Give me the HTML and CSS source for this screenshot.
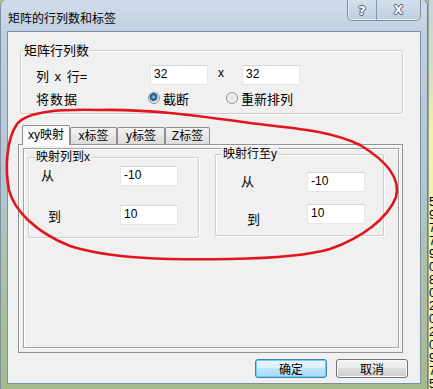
FILE: index.html
```html
<!DOCTYPE html>
<html lang="zh-CN">
<head>
    <meta charset="UTF-8">
    <title>矩阵的行列数和标签</title>
    <link rel="stylesheet" href="styles.css">
</head>
<body>

<div class="desk">
    <div class="window">
        <!-- Title bar -->
        <div class="titlebar">
            <span class="title">矩阵的行列数和标签</span>
            <div class="caption-btns">
                <span class="cbtn help">?</span>
                <span class="cbtn close">X</span>
            </div>
        </div>

        <div class="client">
            <!-- Matrix size -->
            <div class="group size-group">
                <div class="group-title">矩阵行列数</div>
                <div class="row first">
                    <span class="lbl">列 x 行=</span>
                    <span class="edit">32</span>
                    <span class="times">x</span>
                    <span class="edit">32</span>
                </div>
                <div class="row second">
                    <span class="lbl">将数据</span>
                    <span class="radio r1 checked"><i></i>截断</span>
                    <span class="radio"><i></i>重新排列</span>
                </div>
            </div>

            <!-- Tabs -->
            <div class="tabs">
                <span class="tab active t1">xy映射</span>
                <span class="tab t2">x标签</span>
                <span class="tab t3">y标签</span>
                <span class="tab t4">Z标签</span>
            </div>
            <div class="panel">
                <div class="page">
                    <div class="group map map-x">
                        <div class="group-title">映射列到x</div>
                        <div class="field f1">
                            <span class="mlbl">从</span>
                            <span class="edit">-10</span>
                        </div>
                        <div class="field f2">
                            <span class="mlbl">到</span>
                            <span class="edit">10</span>
                        </div>
                    </div>
                    <div class="group map map-y">
                        <div class="group-title">映射行至y</div>
                        <div class="field f1">
                            <span class="mlbl">从</span>
                            <span class="edit">-10</span>
                        </div>
                        <div class="field f2">
                            <span class="mlbl">到</span>
                            <span class="edit">10</span>
                        </div>
                    </div>
                </div>
            </div>

            <!-- Buttons -->
            <div class="buttons">
                <span class="btn default">确定</span>
                <span class="btn">取消</span>
            </div>
        </div>
    </div>

    <!-- window behind, only a sliver visible -->
    <div class="sheet">
        <div class="digits">5<br>9<br>7<br>7<br>9<br>0<br>8<br>0<br>2<br>0<br>2<br>0<br>9<br>7<br>5</div>
    </div>

    <!-- red marker scribble -->
    <svg class="scribble" width="433" height="389" viewBox="0 0 433 389">
        <path d="M 100 110 C 60 109, 28 111, 17 124 C 6 140, 5 170, 9 190 C 14 210, 35 232, 70 246 C 110 259, 170 260, 230 259 C 280 258, 310 255, 330 249 C 362 238, 388 218, 396 197 C 401 178, 385 160, 360 145 C 330 130, 290 128, 250 123 C 200 116, 150 109, 100 110"
              fill="none" stroke="#e0161c" stroke-width="2.6" stroke-linecap="round"/>
    </svg>
</div>

</body>
</html>
```

FILE: styles.css
```css
body {
    margin: 0;
    font-family: "Liberation Sans", "Noto Sans CJK SC", sans-serif;
    font-size: 12px;
    color: #000;
}

.desk {
    position: relative;
    display: flex;
    width: 433px;
    height: 389px;
    overflow: hidden;
    background: #a9bd8f;
}

.window {
    width: 428px;
    height: 389px;
    box-sizing: border-box;
    padding: 0 6px 5px 6px;
    border-left: 1px solid #7f91a3;
    border-right: 1px solid #6d8195;
    border-radius: 6px 6px 0 0;
    background: linear-gradient(to bottom, #c3d3e4 0, #bccddd 60px, #b4c6d2 180px, #adc0a6 270px, #a4ba8b 100%);
    display: flex;
    flex-direction: column;
}

.titlebar {
    height: 31px;
    display: flex;
    justify-content: space-between;
    align-items: flex-start;
    background: linear-gradient(to bottom, #cfdcea 0, #c2d2e3 100%);
    margin: 0 -6px 0 -6px;
    padding: 0 6px 0 7px;
    border-radius: 6px 6px 0 0;
}

.title {
    margin-top: 10px;
    line-height: 15px;
    font-family: "Noto Sans CJK SC", sans-serif;
    font-size: 12px;
}

.caption-btns {
    display: flex;
    width: 74px;
    height: 21px;
    box-sizing: border-box;
    border: 1px solid #7f90a6;
    border-top: none;
    border-radius: 0 0 5px 5px;
    background: linear-gradient(to bottom, #d3dfeb, #bfcfe0);
    box-shadow: inset 0 -1px 0 #e3ebf3, inset 1px 0 0 #e3ebf3;
}

.cbtn {
    display: flex;
    justify-content: center;
    align-items: center;
    font-family: "DejaVu Sans", sans-serif;
    font-weight: bold;
    color: #fff;
    text-shadow: 1px 0 0 #4d5a69, -1px 0 0 #4d5a69, 0 1px 0 #4d5a69, 0 -1px 0 #4d5a69;
}

.help {
    width: 28px;
    font-size: 13px;
    border-right: 1px solid #8798ac;
}

.close {
    flex: 1;
    font-size: 12px;
}

.client {
    flex: 1;
    box-sizing: border-box;
    border: 1px solid #7d8e9f;
    background: #f0f0f0;
    display: flex;
    flex-direction: column;
}

/* group boxes */
.group {
    box-sizing: border-box;
    border: 1px solid #cdcdcd;
    border-radius: 2px;
    box-shadow: inset 1px 1px 0 #fff, 1px 1px 0 #fff;
}

.group-title {
    display: table;
    margin: -8px 0 0 2px;
    padding: 0 1px;
    background: #f0f0f0;
    line-height: 15px;
    font-size: 13px;
}

.size-group {
    margin: 18px 0 0 12px;
    width: 383px;
    height: 64px;
}

.row {
    display: flex;
    align-items: center;
    height: 20px;
}

.row.first {
    margin-top: 7px;
}

.row.second {
    margin-top: 5px;
    height: 16px;
}

.lbl {
    width: 129px;
    padding-left: 15px;
    box-sizing: border-box;
    font-size: 13px;
    word-spacing: 2px;
}

.row.second .lbl {
    width: 127px;
    letter-spacing: 1px;
}

.edit {
    display: block;
    width: 58px;
    height: 20px;
    box-sizing: border-box;
    background: #fff;
    border: 1px solid #e6e6e6;
    border-top-color: #d8d8d8;
    padding-left: 3px;
    line-height: 17px;
    font-size: 12px;
}

.times {
    width: 34px;
    padding-right: 8px;
    box-sizing: border-box;
    text-align: center;
    margin-top: -4px;
}

.radio {
    display: flex;
    align-items: center;
    font-size: 13px;
}

.radio.r1 {
    width: 78px;
}

.radio i {
    width: 12px;
    height: 12px;
    box-sizing: border-box;
    margin-right: 3px;
    border: 1px solid #8e8f8f;
    border-radius: 50%;
    background: radial-gradient(circle at 50% 50%, #e4e4e4 0, #f6f6f6 100%);
}

.radio.checked i {
    background: radial-gradient(circle at 45% 40%, #a6def6 0, #2a7bab 2px, #104f7b 3.5px, #dcdcdc 4.2px, #f6f6f6 100%);
}

/* tabs */
.tabs {
    display: flex;
    align-items: flex-end;
    height: 19px;
    margin: 11px 0 0 14px;
}

.tab {
    height: 17px;
    box-sizing: border-box;
    border: 1px solid #8c8e94;
    border-bottom: none;
    border-radius: 2px 2px 0 0;
    background: linear-gradient(to bottom, #f3f3f3, #dcdcdc);
    line-height: 16px;
    text-align: center;
    font-size: 12px;
}

.tab.active {
    position: relative;
    z-index: 1;
    height: 20px;
    margin-bottom: -1px;
    background: #fafafa;
    line-height: 19px;
}

.t1 { width: 48px; }
.t2 { width: 47px; }
.t3 { width: 48px; }
.t4 { width: 45px; }

.panel {
    margin-left: 10px;
    width: 385px;
    height: 209px;
    box-sizing: border-box;
    border: 1px solid #8f9299;
    box-shadow: inset 1px 1px 0 #fff;
}

.page {
    display: flex;
    align-items: flex-start;
    margin: 3px 0 0 4px;
    width: 376px;
    height: 200px;
    box-sizing: border-box;
    border: 1px solid #a3a3a3;
    box-shadow: inset 1px 1px 0 #fff, 1px 1px 0 #fff;
}

.map .group-title {
    font-size: 12px;
    margin-left: 6px;
}

.map-x {
    margin: 8px 0 0 4px;
    width: 171px;
    height: 81px;
}

.map-y {
    margin: 5px 0 0 16px;
    width: 169px;
    height: 82px;
}

.field {
    display: flex;
    align-items: flex-start;
}

.mlbl {
    width: 91px;
    box-sizing: border-box;
    line-height: 20px;
    font-size: 13px;
}

.map-x .f1 { margin-top: 1px; }
.map-x .f1 .mlbl { padding-left: 12px; }
.map-x .f2 { margin-top: 19px; }
.map-x .f2 .mlbl { padding-left: 19px; margin-top: 2px; }

.map-y .f1 { margin-top: 10px; }
.map-y .f1 .mlbl { padding-left: 25px; }
.map-y .f2 { margin-top: 12px; }
.map-y .f2 .mlbl { padding-left: 31px; margin-top: 6px; }

/* dialog buttons */
.buttons {
    display: flex;
    justify-content: flex-end;
    gap: 9px;
    margin-top: 6px;
    padding-right: 12px;
}

.btn {
    width: 72px;
    height: 19px;
    box-sizing: border-box;
    border: 1px solid #707070;
    border-radius: 3px;
    background: linear-gradient(to bottom, #f2f2f2 0, #ebebeb 50%, #dddddd 50%, #cfcfcf 100%);
    box-shadow: inset 0 0 0 1px #fbfbfb;
    line-height: 17px;
    text-align: center;
    font-family: "Noto Sans CJK SC", sans-serif;
    font-size: 12px;
}

.btn.default {
    border-color: #3c7fb1;
    background: linear-gradient(to bottom, #eaf6fd 0, #d9f0fc 50%, #bee6fd 50%, #a7d9f5 100%);
    box-shadow: inset 0 0 0 1px #6fd0f7;
}

/* sliver of the window behind */
.sheet {
    flex: 1;
    overflow: hidden;
    background: linear-gradient(to bottom, #c8d5de 0, #d3ddc4 70px, #f4f1a4 130px, #f7f4b2 100%);
    border-left: 1px solid #9aa79a;
}

.digits {
    padding-top: 196px;
    line-height: 13px;
    font-size: 12px;
}

.scribble {
    position: absolute;
    left: 0;
    top: 0;
    pointer-events: none;
}
```
